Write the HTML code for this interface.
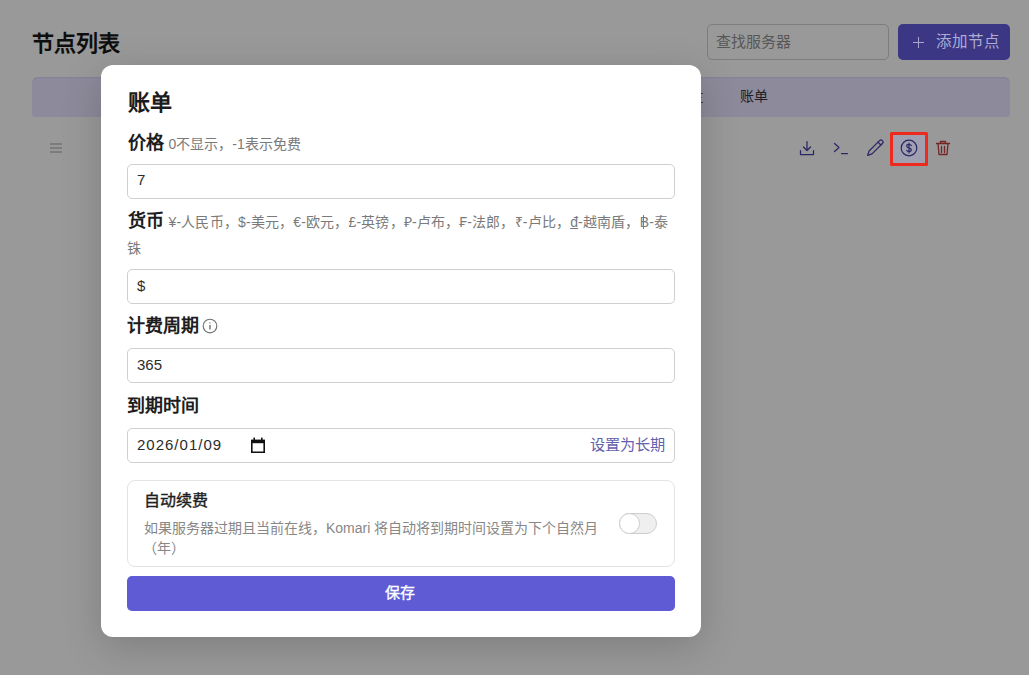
<!DOCTYPE html>
<html lang="zh-CN"><head><meta charset="utf-8">
<style>
*{box-sizing:border-box;margin:0;padding:0}
html,body{width:1029px;height:675px;overflow:hidden;background:#999999;font-family:"Liberation Sans",sans-serif;}
.a{position:absolute;white-space:nowrap;line-height:1}
#page{position:absolute;left:0;top:0;width:1029px;height:675px;background:#999999}
.modal{position:absolute;left:101px;top:65px;width:600px;height:572px;background:#fff;border-radius:12px;box-shadow:0 10px 40px rgba(0,0,0,0.18)}
.inp{position:absolute;left:26px;width:548px;height:35px;border:1px solid #cfcfcf;border-radius:5px;background:#fff}
.lbl{font-size:18px;font-weight:bold;color:#1d1d1d}
.desc{font-size:14px;color:#7a7a7a;font-weight:350}
.val{font-size:15px;color:#2b2b2b}
</style></head><body>
<div id="page">
  <div class="a" style="left:32px;top:33px;font-size:22px;font-weight:bold;color:#0e0e0e">节点列表</div>
  <div class="a" style="left:707px;top:24px;width:182px;height:36px;border:1px solid #7d7d7d;border-radius:5px"></div>
  <div class="a" style="left:716px;top:34px;font-size:15px;color:#575757;font-weight:350">查找服务器</div>
  <div class="a" style="left:898px;top:24px;width:112px;height:36px;background:#3b3785;border-radius:5px"></div>
  <div class="a" style="left:913px;top:37px;width:11px;height:11px">
    <div style="position:absolute;left:5px;top:0;width:1.2px;height:11px;background:#a9a7cf"></div>
    <div style="position:absolute;left:0;top:5px;width:11px;height:1.2px;background:#a9a7cf"></div>
  </div>
  <div class="a" style="left:936px;top:33.5px;font-size:15.5px;color:#aeacd3;font-weight:350">添加节点</div>
  <div class="a" style="left:32px;top:77px;width:978px;height:40px;background:#8d8a9b;border-radius:6px 6px 3px 3px;box-shadow:inset 0 1.5px 0 #86839a"></div>
  <div class="a" style="left:740px;top:89px;font-size:14px;color:#1e1e24;font-weight:350">账单</div>
  <!-- hamburger -->
  <div class="a" style="left:50px;top:143.2px;width:12px;height:1.6px;background:#7c7c7c"></div>
  <div class="a" style="left:50px;top:147.2px;width:12px;height:1.6px;background:#7c7c7c"></div>
  <div class="a" style="left:50px;top:151.2px;width:12px;height:1.6px;background:#7c7c7c"></div>
  <!-- icons -->
  <div class="a" style="left:890px;top:132px;width:37px;height:33px;background:#a0a0b1"></div>
  <svg class="a" style="left:798px;top:139px" width="18" height="18" viewBox="0 0 18 18" fill="none" stroke="#2b2866" stroke-width="1.25" stroke-linecap="round" stroke-linejoin="round">
    <path d="M9 2.5v9M5.5 8l3.5 3.5L12.5 8M2.5 11.5v4h13v-4"/>
  </svg>
  <svg class="a" style="left:832px;top:140px" width="18" height="16" viewBox="0 0 18 16" fill="none" stroke="#2b2866" stroke-width="1.25" stroke-linecap="round" stroke-linejoin="round">
    <path d="M2.5 3.5l4.5 4-4.5 4M9.5 13.5h6"/>
  </svg>
  <svg class="a" style="left:866px;top:139px" width="18" height="18" viewBox="0 0 18 18" fill="none" stroke="#2b2866" stroke-width="1.25" stroke-linecap="round" stroke-linejoin="round">
    <path d="M1.6 16.4L3.1 12 13.5 1.6A2 2 0 0 1 16.4 4.5L6 14.9Z"/><path d="M12 3.1l2.9 2.9"/>
  </svg>
  <svg class="a" style="left:900px;top:139px" width="18" height="18" viewBox="0 0 18 18" fill="none" stroke="#2b2866" stroke-width="1.2" stroke-linecap="round" stroke-linejoin="round">
    <circle cx="9" cy="9" r="7.8"/>
    <path d="M11.3 6.6c-.4-.8-1.3-1.3-2.3-1.3-1.3 0-2.3.8-2.3 1.8 0 2.3 4.6 1.3 4.6 3.7 0 1-1 1.8-2.3 1.8-1 0-1.9-.5-2.3-1.3M9 4v10"/>
  </svg>
  <svg class="a" style="left:934px;top:139px" width="18" height="18" viewBox="0 0 18 18" fill="none" stroke="#772424" stroke-width="1.3" stroke-linecap="round" stroke-linejoin="round">
    <path d="M2.5 4.5h13M6.5 4.5V2.5h5v2M4 4.5l1 11h8l1-11M7.5 7.5v6M10.5 7.5v6"/>
  </svg>
  <div class="a" style="left:889.5px;top:131.5px;width:38px;height:34px;border:3px solid #ee2a1e;border-radius:1.5px"></div>
  <div class="a" style="left:701px;top:92.5px;width:2px;height:1.3px;background:#3a3946"></div>
  <div class="a" style="left:701px;top:97px;width:1.2px;height:1px;background:#5a5966"></div>
  <div class="a" style="left:701px;top:101.5px;width:2px;height:1.3px;background:#3a3946"></div>
</div>

<div class="modal">
  <div class="a" style="left:27px;top:27px;font-size:22px;font-weight:bold;color:#1c1c1c">账单</div>

  <div class="a" style="left:27px;top:69px"><span class="lbl">价格</span> <span class="desc">0不显示，-1表示免费</span></div>
  <div class="inp" style="top:99px"></div>
  <div class="a val" style="left:36px;top:107px">7</div>

  <div class="a" style="left:27px;top:147px"><span class="lbl">货币</span> <span class="desc" style="letter-spacing:0.17px">¥-人民币，$-美元，€-欧元，£-英镑，₽-卢布，₣-法郎，₹-卢比，<span style="text-decoration:underline;text-underline-offset:1px">đ</span>-越南盾，<span style="position:relative;display:inline-block">B<span style="position:absolute;left:3.5px;top:0px;width:1px;height:14px;background:#7a7a7a"></span></span>-泰</span></div>
  <div class="a desc" style="left:26px;top:176px">铢</div>
  <div class="inp" style="top:204px"></div>
  <div class="a val" style="left:36px;top:213px">$</div>

  <div class="a lbl" style="left:26px;top:252px">计费周期</div>
  <svg class="a" style="left:101px;top:253px" width="16" height="16" viewBox="0 0 16 16" fill="none" stroke="#707070" stroke-width="1.15">
    <circle cx="8" cy="8" r="6.8"/>
    <path d="M8 7v4.5" stroke-width="1.4"/>
    <circle cx="8" cy="4.9" r="0.7" fill="#7a7a7a" stroke="none"/>
  </svg>
  <div class="inp" style="top:283px"></div>
  <div class="a val" style="left:36px;top:292px">365</div>

  <div class="a lbl" style="left:26px;top:332px">到期时间</div>
  <div class="inp" style="top:363px"></div>
  <div class="a val" style="left:36px;top:372px;letter-spacing:1px">2026/01/09</div>
  <svg class="a" style="left:150px;top:371.5px" width="14" height="16" viewBox="0 0 14 16">
    <path d="M0.8 3.6h12.4v11.6H0.8z" fill="none" stroke="#111" stroke-width="1.6"/>
    <rect x="0" y="2.8" width="14" height="3.4" fill="#111"/>
    <rect x="2.4" y="0.6" width="1.6" height="3" fill="#111"/>
    <rect x="10" y="0.6" width="1.6" height="3" fill="#111"/>
  </svg>
  <div class="a" style="left:488.5px;top:372px;font-size:15.2px;color:#6360ac;font-weight:350">设置为长期</div>

  <div class="a" style="left:26px;top:415px;width:548px;height:87px;border:1px solid #e3e3e3;border-radius:8px"></div>
  <div class="a" style="left:43px;top:428px;font-size:16px;font-weight:400;-webkit-text-stroke:0.4px #1e1e1e;color:#1e1e1e">自动续费</div>
  <div class="a" style="left:43px;top:456px;font-size:14px;color:#878787;font-weight:350">如果服务器过期且当前在线，Komari 将自动将到期时间设置为下个自然月</div>
  <div class="a" style="left:42px;top:476px;font-size:14px;color:#878787;font-weight:350">（年）</div>
  <div class="a" style="left:518px;top:448px;width:38px;height:21px;border-radius:11px;background:#efefef;border:1px solid #cdcdcd"></div>
  <div class="a" style="left:518px;top:448px;width:21px;height:21px;border-radius:11px;background:#fff;border:1px solid #cdcdcd"></div>

  <div class="a" style="left:26px;top:511px;width:548px;height:35px;background:#5e5bd5;border-radius:5px"></div>
  <div class="a" style="left:284px;top:520px;font-size:15px;font-weight:400;-webkit-text-stroke:0.35px #fff;color:#fff">保存</div>
</div>
</body></html>
